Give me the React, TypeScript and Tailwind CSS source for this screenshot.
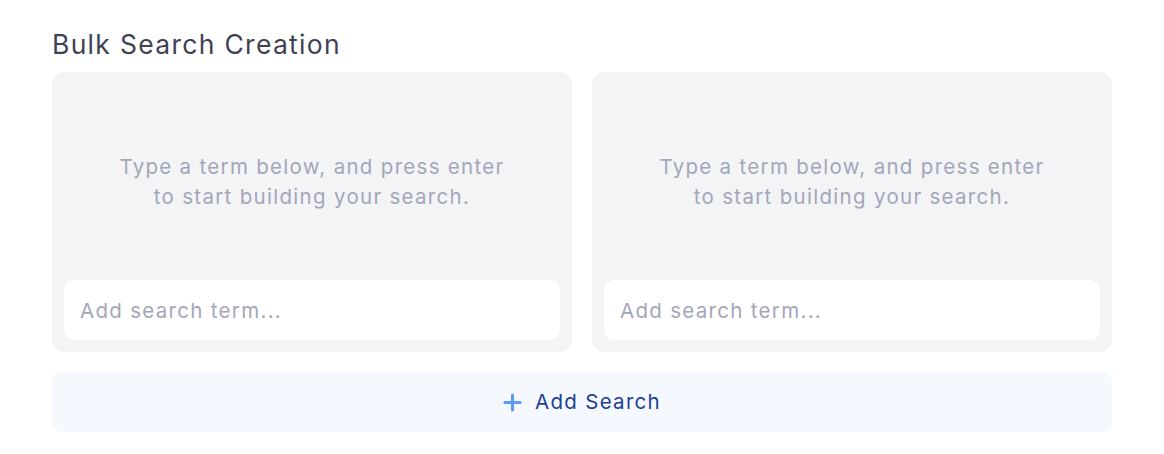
import React from "react";

function SearchCard() {
  return (
    <div className="flex h-[280px] flex-col rounded-[12px] bg-[#f3f4f6] p-3">
      <div className="flex flex-1 items-center justify-center pb-[1px] text-center text-[20.5px] leading-[30px] tracking-[1.3px] text-[#a3a6ba]">
        <p>
          Type a term below, and press enter
          <br />
          to start building your search.
        </p>
      </div>
      <input
        className="h-[60px] w-full rounded-[10px] bg-white px-4 text-[20.5px] tracking-[1.3px] text-[#3f4254] outline-none placeholder:text-[#a3a6ba]"
        placeholder="Add search term..."
      />
    </div>
  );
}

export default function App() {
  return (
    <div
      className="min-h-[454px] w-[1164px] bg-white px-[52px] pt-[27px]"
      style={{ fontFamily: "Inter, 'Noto Sans', sans-serif" }}
    >
      <h2 className="mb-[11px] text-[26.5px] leading-[34px] tracking-[1.3px] text-[#3f4254]">Bulk Search Creation</h2>
      <div className="grid grid-cols-2 gap-5">
        <SearchCard />
        <SearchCard />
      </div>
      <button className="mt-5 flex h-[60px] w-full items-center justify-center gap-[13px] rounded-[10px] bg-[#f5f9ff] text-[20.5px] tracking-[1.3px] text-[#1e3f93]">
        <svg width="19" height="19" viewBox="0 0 20 20" fill="none">
          <path d="M10 2v16M2 10h16" stroke="#5b9cf5" strokeWidth="3.2" strokeLinecap="round" />
        </svg>
        Add Search
      </button>
    </div>
  );
}
